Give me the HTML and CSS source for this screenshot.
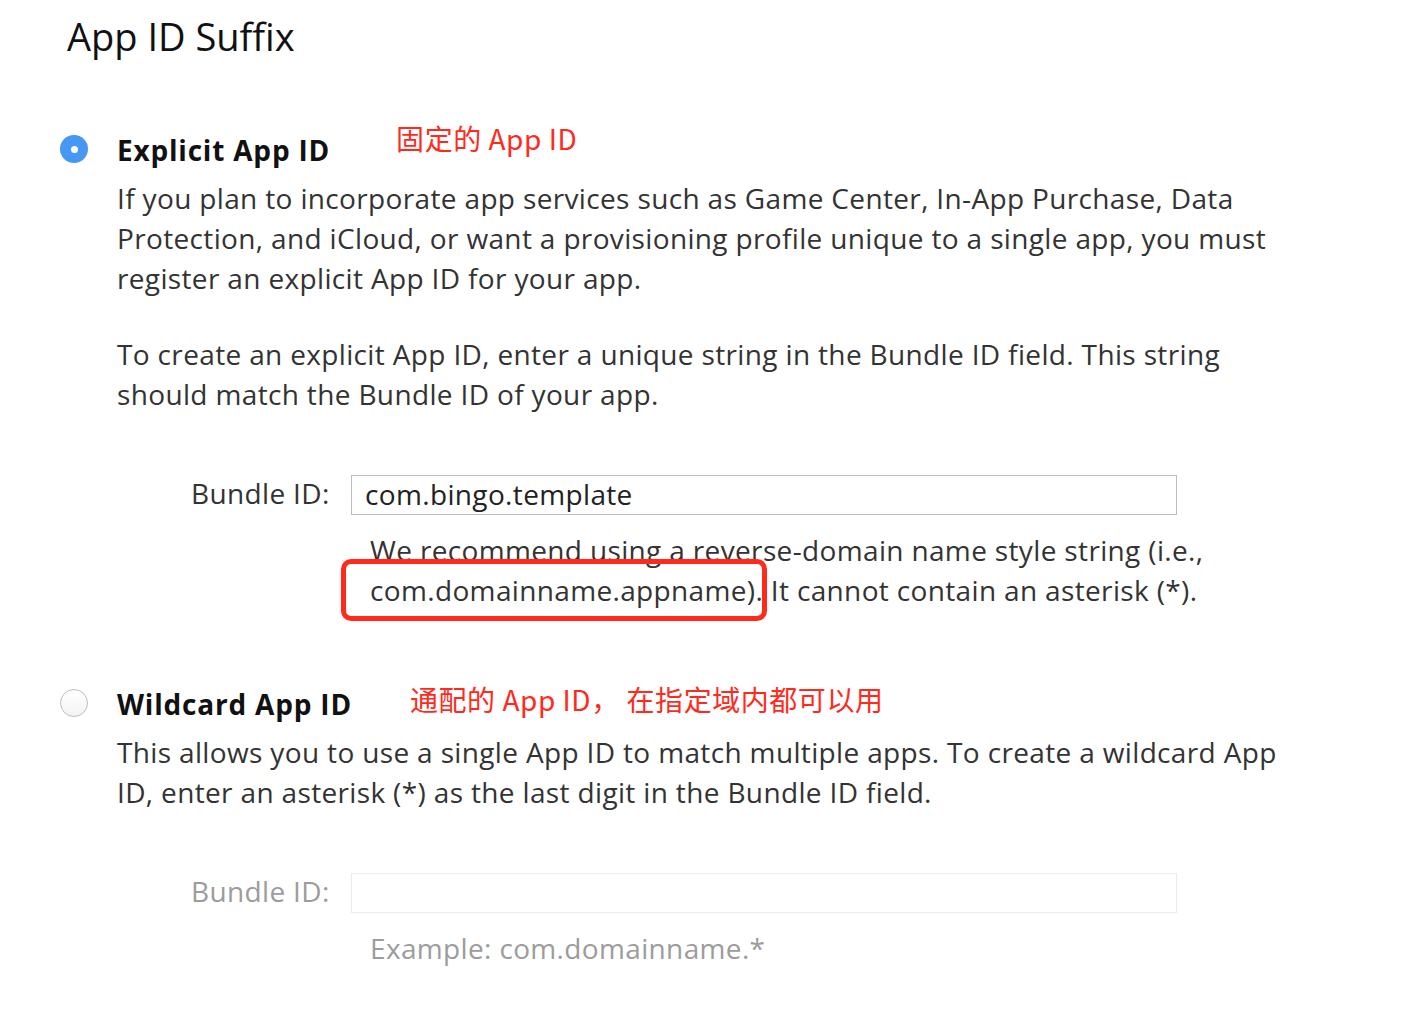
FILE: index.html
```html
<!DOCTYPE html>
<html lang="en">
<head>
<meta charset="utf-8">
<title>App ID Suffix</title>
<link rel="stylesheet" href="styles.css">
</head>
<body>
<div class="page">
  <h1 class="title">App ID Suffix</h1>

  <section class="option">
    <div class="radio radio-on"><span class="dot"></span></div>
    <div class="option-body">
      <div class="option-head">
        <span class="option-name">Explicit App ID</span>
        <span class="note note-1">固定的 App ID</span>
      </div>
      <p class="para">If you plan to incorporate app services such as Game Center, In-App Purchase, Data<br>Protection, and iCloud, or want a provisioning profile unique to a single app, you must<br>register an explicit App ID for your app.</p>
      <p class="para para-2">To create an explicit App ID, enter a unique string in the Bundle ID field. This string<br>should match the Bundle ID of your app.</p>
      <div class="field">
        <label class="field-label">Bundle ID:</label>
        <div class="input">com.bingo.template</div>
      </div>
      <div class="help">
        <p>We recommend using a reverse-domain name style string (i.e.,<br>com.domainname.appname). It cannot contain an asterisk (*).</p>
        <span class="highlight"></span>
      </div>
    </div>
  </section>

  <section class="option option-2">
    <div class="radio radio-off"></div>
    <div class="option-body">
      <div class="option-head">
        <span class="option-name">Wildcard App ID</span>
        <span class="note note-2">通配的 App ID， 在指定域内都可以用</span>
      </div>
      <p class="para">This allows you to use a single App ID to match multiple apps. To create a wildcard App<br>ID, enter an asterisk (*) as the last digit in the Bundle ID field.</p>
      <div class="field field-disabled">
        <label class="field-label">Bundle ID:</label>
        <div class="input"></div>
      </div>
      <div class="help help-disabled">
        <p>Example: com.domainname.*</p>
      </div>
    </div>
  </section>
</div>
</body>
</html>
```

FILE: styles.css
```css
* { box-sizing: border-box; }
html, body { margin: 0; padding: 0; background: #fff; }
body {
  font-family: "Open Sans", "Noto Sans", "Noto Sans CJK SC", sans-serif;
  color: #333;
  font-size: 28px;
  letter-spacing: 0.35px;
}
.page {
  padding: 11px 0 0 60px;
}
.title {
  margin: 0 0 0 7px;
  font-size: 38px;
  font-weight: 400;
  line-height: 50px;
  color: #111;
  letter-spacing: 0;
}
.option {
  display: flex;
  margin-top: 69px;
}
.option-2 { margin-top: 74px; }
.radio {
  flex: 0 0 28px;
  width: 28px;
  height: 28px;
  border-radius: 50%;
  margin-top: 5px;
  margin-right: 29px;
  display: flex;
  align-items: center;
  justify-content: center;
}
.radio-on { background: #4797f5; }
.radio-on .dot {
  width: 7px; height: 7px; border-radius: 50%; background: #fff;
}
.radio-off {
  background: linear-gradient(#fff, #f4f4f4);
  border: 1.5px solid #bdbdbd;
}
.option-body { flex: 1; }
.option-head {
  display: flex;
  align-items: flex-start;
  height: 40px;
}
.option-name {
  font-weight: 700;
  color: #111;
  line-height: 40px;
  letter-spacing: 0.8px;
}
.note {
  font-family: "Noto Sans CJK SC", "Open Sans", sans-serif;
  color: #ff2a1c;
  font-size: 28px;
  line-height: 40px;
  letter-spacing: 0.55px;
}
.note-1 { margin-left: 66px; margin-top: -12px; }
.note-2 { margin-left: 58px; margin-top: -5px; }
.para {
  margin: 8px 0 0;
  line-height: 40px;
  white-space: nowrap;
}
.para-2 { margin-top: 36px; }
.field {
  display: flex;
  align-items: flex-start;
  margin-top: 61px;
  padding-left: 74px;
}
.field-label {
  width: 160px;
  padding-right: 22px;
  text-align: right;
  line-height: 37px;
  white-space: nowrap;
}
.input {
  width: 826px;
  height: 40px;
  border: 1px solid #bdbdbd;
  padding: 0 13px;
  line-height: 36px;
  color: #222;
}
.help {
  position: relative;
  margin: 15px 0 0 253px;
}
.help p {
  margin: 0;
  line-height: 40px;
  white-space: nowrap;
}
.highlight {
  position: absolute;
  left: -29px;
  top: 29px;
  width: 426px;
  height: 62px;
  border: 5px solid #ff2a1c;
  border-radius: 10px;
}
.field-disabled .field-label { color: #9c9c9c; }
.field-disabled .input { border-color: #ebebeb; }
.help-disabled p { color: #9c9c9c; }
```
